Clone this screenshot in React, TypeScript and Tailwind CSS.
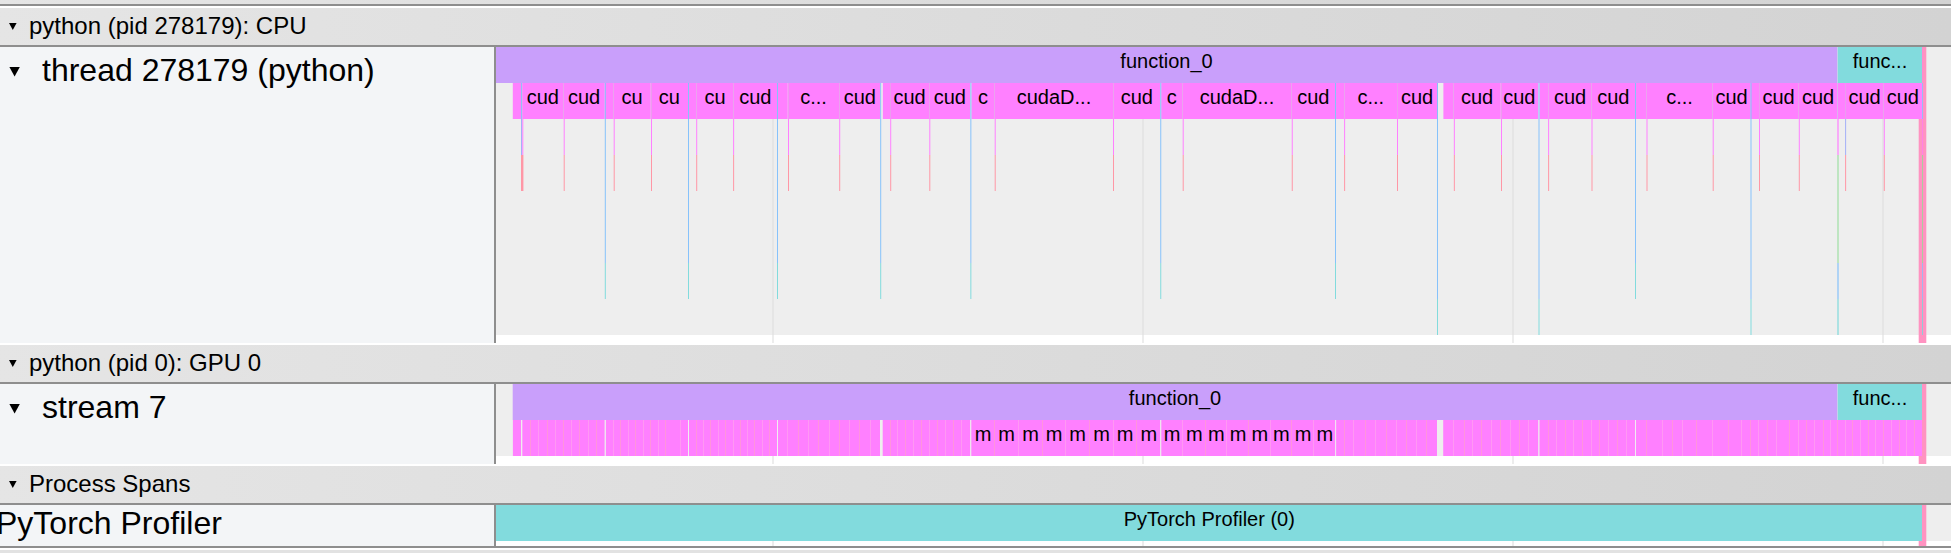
import type { ReactNode } from "react";

const ORIGIN = 496;
const WIDTH = 1455;
const ROW = 36;

const COLORS = {
  magenta: "#ff80ff",
  violet: "#c99ffb",
  teal: "#82dbdd",
  blue: "#86c2fb",
  red: "#ff97a6",
  green: "#a0e0a4",
  indigo: "#a3b0f7",
  pink: "#ff93c1",
  gridline: "#dbdbdb",
  lane: "#eeeeee",
};

type Slice = { start: number; end: number; label?: string };
type Tick = { x: number; kind: "api" | "sync" | "deep" };

const GRIDLINES = [772, 1142, 1512, 1882];

const CPU_SLICES: Slice[] = [
  { start: 512.8, end: 521.2 },
  { start: 522, end: 563.5, label: "cud" },
  { start: 563.5, end: 604.5, label: "cud" },
  { start: 604.5, end: 613.5 },
  { start: 613.5, end: 650.5, label: "cu" },
  { start: 650.5, end: 688, label: "cu" },
  { start: 688, end: 696.5 },
  { start: 696.5, end: 733.5, label: "cu" },
  { start: 733.5, end: 777, label: "cud" },
  { start: 777, end: 787.5 },
  { start: 787.5, end: 839.5, label: "c..." },
  { start: 839.5, end: 880.2, label: "cud" },
  { start: 882.8, end: 890.5 },
  { start: 889.5, end: 929.5, label: "cud" },
  { start: 929.5, end: 970, label: "cud" },
  { start: 971.5, end: 994.5, label: "c" },
  { start: 994.5, end: 1113.5, label: "cudaD..." },
  { start: 1113.5, end: 1160.2, label: "cud" },
  { start: 1161.2, end: 1182.5, label: "c" },
  { start: 1182.5, end: 1291.5, label: "cudaD..." },
  { start: 1291.5, end: 1335, label: "cud" },
  { start: 1335, end: 1344.5 },
  { start: 1344.5, end: 1397, label: "c..." },
  { start: 1397, end: 1437.2, label: "cud" },
  { start: 1443.4, end: 1453.5 },
  { start: 1453.5, end: 1500.5, label: "cud" },
  { start: 1500.5, end: 1538.2, label: "cud" },
  { start: 1539.6, end: 1548.5 },
  { start: 1548.5, end: 1591.5, label: "cud" },
  { start: 1591.5, end: 1635, label: "cud" },
  { start: 1636, end: 1646.5 },
  { start: 1646.5, end: 1712.5, label: "c..." },
  { start: 1712.5, end: 1750.5, label: "cud" },
  { start: 1750.5, end: 1759.5 },
  { start: 1758.5, end: 1798.5, label: "cud" },
  { start: 1798.5, end: 1837.5, label: "cud" },
  { start: 1837.5, end: 1845.5 },
  { start: 1845.5, end: 1883.5, label: "cud" },
  { start: 1883.5, end: 1922, label: "cud" },
];

const CPU_TICKS: Tick[] = [
  { x: 563.7, kind: "api" },
  { x: 604.8, kind: "sync" },
  { x: 613.7, kind: "api" },
  { x: 651, kind: "api" },
  { x: 688, kind: "sync" },
  { x: 696.2, kind: "api" },
  { x: 733.1, kind: "api" },
  { x: 777, kind: "sync" },
  { x: 788, kind: "api" },
  { x: 839.2, kind: "api" },
  { x: 880.2, kind: "sync" },
  { x: 890.2, kind: "api" },
  { x: 929.3, kind: "api" },
  { x: 970.35, kind: "sync" },
  { x: 994.7, kind: "api" },
  { x: 1113, kind: "api" },
  { x: 1160.25, kind: "sync" },
  { x: 1182.7, kind: "api" },
  { x: 1291.75, kind: "api" },
  { x: 1335, kind: "sync" },
  { x: 1344.1, kind: "api" },
  { x: 1397, kind: "api" },
  { x: 1437, kind: "deep" },
  { x: 1453.85, kind: "api" },
  { x: 1501, kind: "api" },
  { x: 1538.5, kind: "deep" },
  { x: 1548.1, kind: "api" },
  { x: 1591.5, kind: "api" },
  { x: 1635, kind: "sync" },
  { x: 1646.5, kind: "api" },
  { x: 1712.7, kind: "api" },
  { x: 1750.5, kind: "deep" },
  { x: 1759, kind: "api" },
  { x: 1798.8, kind: "api" },
  { x: 1883.8, kind: "api" },
];

const KERNEL_EDGES = [
  530, 538, 547, 555, 563, 571, 579, 588, 596, 613, 620, 628, 635, 643, 650, 658, 665, 680, 696, 703, 710, 718, 725,
  733, 740, 747, 754, 762, 769, 787, 798, 808, 818, 829, 839, 849, 859, 870, 890, 897, 905, 913, 921, 929, 937, 945,
  953, 961, 994, 1018, 1042, 1065, 1089, 1113, 1136, 1182, 1205, 1226, 1248, 1270, 1291, 1313, 1344, 1353, 1365, 1375,
  1386, 1396, 1406, 1416, 1426, 1453, 1464, 1472, 1481, 1491, 1500, 1510, 1519, 1528, 1548, 1556, 1565, 1573, 1582,
  1591, 1599, 1608, 1617, 1626, 1646, 1662, 1672, 1682, 1696, 1712, 1728, 1741, 1750, 1758, 1767, 1776, 1789, 1798,
  1806, 1814, 1823, 1830, 1837, 1845, 1852, 1860, 1868, 1875, 1883, 1891, 1899, 1906, 1914,
];

const KERNEL_GAPS: [number, number][] = [
  [521, 1.3],
  [604.6, 1.3],
  [688, 1],
  [777, 1],
  [880, 2.7],
  [970.1, 1.2],
  [1160.1, 1.2],
  [1335.1, 1],
  [1437, 6.2],
  [1538.2, 1.3],
  [1635, 1],
];

const MEM_EDGES = [
  971, 994, 1018, 1042, 1065, 1089, 1113, 1136, 1160.5, 1182.5, 1205, 1226.5, 1248.5, 1270, 1291.5, 1313.5, 1335,
];

function Label({ x, y, children }: { x: number; y: number; children: ReactNode }) {
  return (
    <text x={x} y={y} textAnchor="middle" fontSize={20} fill="#000">
      {children}
    </text>
  );
}

function Chart({ height, laneHeight, children }: { height: number; laneHeight: number; children: ReactNode }) {
  return (
    <svg
      className="block shrink-0 bg-white"
      width={WIDTH}
      height={height}
      viewBox={`${ORIGIN} 0 ${WIDTH} ${height}`}
    >
      <rect x={ORIGIN} y={0} width={WIDTH} height={laneHeight} fill={COLORS.lane} />
      {GRIDLINES.map((x) => (
        <rect key={x} x={x} y={0} width={2} height={height} fill={COLORS.gridline} fillOpacity={0.5} />
      ))}
      <rect x={1918.7} y={0} width={7.6} height={height} fill={COLORS.pink} />
      {children}
    </svg>
  );
}

function Bar({ x, end, y, color, h = ROW }: { x: number; end: number; y: number; color: string; h?: number }) {
  return <rect x={x} y={y} width={end - x} height={h} fill={color} />;
}

function TickMark({ x, kind }: Tick) {
  if (kind === "api") {
    return (
      <g>
        <rect x={Math.floor(x)} y={36} width={1} height={36} fill="#e6a6ea" fillOpacity={0.75} />
        <Bar x={x} end={x + 1} y={72} color={COLORS.magenta} />
        <Bar x={x} end={x + 1} y={108} color={COLORS.red} />
      </g>
    );
  }
  const blueEnd = kind === "deep" ? 252 : 216;
  return (
    <g>
      <Bar x={x} end={x + 1} y={36} h={blueEnd - 36} color={COLORS.blue} />
      <Bar x={x} end={x + 1} y={blueEnd} color={COLORS.teal} />
    </g>
  );
}

function CpuChart() {
  return (
    <Chart height={296} laneHeight={288}>
      <Bar x={496} end={1837.4} y={0} color={COLORS.violet} />
      <Bar x={1837.7} end={1922} y={0} color={COLORS.teal} />
      <Bar x={1922} end={1923} y={0} color="#ff8ad0" />
      <rect x={1918} y={36} width={10} height={36} fill={COLORS.lane} />
      <rect x={1922} y={36} width={4.3} height={36} fill={COLORS.pink} />
      {CPU_SLICES.map((s) => (
        <Bar key={s.start} x={s.start} end={s.end} y={36} color={COLORS.magenta} />
      ))}
      {CPU_TICKS.map((t) => (
        <TickMark key={t.x} {...t} />
      ))}
      <Bar x={521} end={522} y={36} color="#92c0f6" />
      <Bar x={522} end={523} y={36} color="#f596f6" />
      <Bar x={521} end={522} y={72} color={COLORS.indigo} />
      <Bar x={522} end={523.4} y={72} color="#fa9dfa" />
      <Bar x={521} end={523.4} y={108} color={COLORS.red} />

      <Bar x={1837} end={1838} y={36} color="#dcb4ee" />
      <Bar x={1837.4} end={1838.6} y={72} color={COLORS.magenta} />
      <Bar x={1837.4} end={1838.6} y={108} h={108} color={COLORS.green} />
      <Bar x={1837.4} end={1838.6} y={216} color={COLORS.blue} />
      <Bar x={1837.4} end={1838.6} y={252} color={COLORS.teal} />

      <Bar x={1845} end={1846} y={36} color="#eb9cf0" />
      <Bar x={1845.1} end={1846.1} y={72} color={COLORS.indigo} />
      <Bar x={1845.1} end={1846.1} y={108} color={COLORS.red} />

      <Bar x={1922} end={1923} y={36} color="#96bdf4" />
      <Bar x={1922} end={1923} y={72} color="#ff82e6" />
      <Bar x={1922} end={1923} y={108} h={108} color="#a9cd9f" />
      <Bar x={1922} end={1923} y={216} color="#a0b8ec" />
      <Bar x={1922} end={1923} y={252} color="#90cbd5" />

      <Label x={1166.5} y={21}>function_0</Label>
      <Label x={1880} y={21}>func...</Label>
      {CPU_SLICES.filter((s) => s.label).map((s) => (
        <Label key={s.start} x={(s.start + s.end) / 2} y={57}>
          {s.label}
        </Label>
      ))}
    </Chart>
  );
}

function GpuChart() {
  return (
    <Chart height={80} laneHeight={72}>
      <Bar x={512.7} end={1837.4} y={0} color={COLORS.violet} />
      <Bar x={1837.7} end={1922} y={0} color={COLORS.teal} />
      <rect x={1918} y={36} width={4} height={36} fill={COLORS.lane} />
      <Bar x={512.9} end={1922} y={36} color={COLORS.magenta} />
      {KERNEL_EDGES.map((x, i) => (
        <rect key={x} x={x} y={36} width={1} height={36} fill={i % 2 ? "#ff9ef0" : "#ff98d4"} fillOpacity={0.8} />
      ))}
      {KERNEL_GAPS.map(([x, w]) => (
        <rect key={x} x={x} y={36} width={w} height={36} fill={COLORS.lane} />
      ))}
      <Label x={1175} y={21}>function_0</Label>
      <Label x={1880} y={21}>func...</Label>
      {MEM_EDGES.slice(1).map((x, i) => (
        <Label key={x} x={(x + MEM_EDGES[i]) / 2 + 0.5} y={57}>
          m
        </Label>
      ))}
    </Chart>
  );
}

function SpanChart() {
  return (
    <Chart height={41} laneHeight={36}>
      <Bar x={496} end={1922} y={0} color={COLORS.teal} />
      <Label x={1209.3} y={21}>PyTorch Profiler (0)</Label>
    </Chart>
  );
}

function ProcessHeader({ title }: { title: string }) {
  return (
    <header className="mt-[2px] flex h-[39px] items-center border-b-2 border-[#8e8e8e] bg-linear-to-r from-[#e5e5e5] to-[#d3d3d3] pl-[9px] text-2xl leading-[36px]">
      <svg className="mr-[12px] block h-[7px] w-[8px]" viewBox="0 0 8 7">
        <path d="M0 0H7.6L3.8 7Z" />
      </svg>
      <h2 className="-mt-[2px]">{title}</h2>
    </header>
  );
}

function Track({ title, arrow = true, children }: { title: string; arrow?: boolean; children: ReactNode }) {
  return (
    <section className="flex overflow-hidden">
      <div className="flex w-[496px] shrink-0 items-start border-r-2 border-[#8e8e8e] bg-[#f3f5f7]">
        {arrow && (
          <svg className="mt-[20px] mr-[13px] ml-[9px] block h-[10px] w-[11px] shrink-0" viewBox="0 0 11 10">
            <path d="M.4 0H10.8L5.6 9.6Z" />
          </svg>
        )}
        <h3
          className={
            arrow
              ? "mt-[5px] ml-[9px] text-[32px] leading-[36px] whitespace-nowrap"
              : "-ml-[4px] h-[41px] text-[32px] leading-[36px] whitespace-nowrap"
          }
        >
          {title}
        </h3>
      </div>
      {children}
    </section>
  );
}

export default function App() {
  return (
    <main className="flex h-[553px] w-[1951px] flex-col overflow-hidden bg-white font-['Liberation_Sans',Arial,sans-serif] text-black">
      <div className="h-[6px] shrink-0 border-b-2 border-[#8e8e8e] bg-linear-to-r from-[#e5e5e5] to-[#d3d3d3]" />
      <ProcessHeader title="python (pid 278179): CPU" />
      <Track title="thread 278179 (python)">
        <CpuChart />
      </Track>
      <ProcessHeader title="python (pid 0): GPU 0" />
      <Track title="stream 7">
        <GpuChart />
      </Track>
      <ProcessHeader title="Process Spans" />
      <Track title="PyTorch Profiler" arrow={false}>
        <SpanChart />
      </Track>
      <div className="mb-[2px] h-[2px] shrink-0 bg-[#8e8e8e]" />
      <div className="h-[3px] shrink-0 bg-[#e2e2e2]" />
    </main>
  );
}
